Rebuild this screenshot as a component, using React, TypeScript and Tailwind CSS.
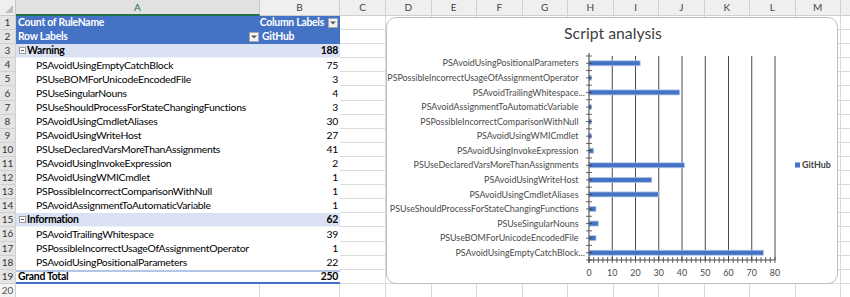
import React from "react";

type Row = {
  kind: "head1" | "head2" | "group" | "item" | "total" | "empty";
  label?: string;
  value?: number;
};

const ROWS: Row[] = [
  { kind: "head1" },
  { kind: "head2" },
  { kind: "group", label: "Warning", value: 188 },
  { kind: "item", label: "PSAvoidUsingEmptyCatchBlock", value: 75 },
  { kind: "item", label: "PSUseBOMForUnicodeEncodedFile", value: 3 },
  { kind: "item", label: "PSUseSingularNouns", value: 4 },
  { kind: "item", label: "PSUseShouldProcessForStateChangingFunctions", value: 3 },
  { kind: "item", label: "PSAvoidUsingCmdletAliases", value: 30 },
  { kind: "item", label: "PSAvoidUsingWriteHost", value: 27 },
  { kind: "item", label: "PSUseDeclaredVarsMoreThanAssignments", value: 41 },
  { kind: "item", label: "PSAvoidUsingInvokeExpression", value: 2 },
  { kind: "item", label: "PSAvoidUsingWMICmdlet", value: 1 },
  { kind: "item", label: "PSPossibleIncorrectComparisonWithNull", value: 1 },
  { kind: "item", label: "PSAvoidAssignmentToAutomaticVariable", value: 1 },
  { kind: "group", label: "Information", value: 62 },
  { kind: "item", label: "PSAvoidTrailingWhitespace", value: 39 },
  { kind: "item", label: "PSPossibleIncorrectUsageOfAssignmentOperator", value: 1 },
  { kind: "item", label: "PSAvoidUsingPositionalParameters", value: 22 },
  { kind: "total", label: "Grand Total", value: 250 },
  { kind: "empty" },
];

const EXTRA_COLS = ["C", "D", "E", "F", "G", "H", "I", "J", "K", "L", "M", ""];

// chart categories, top to bottom as Excel draws them
const SERIES: { name: string; value: number; cut?: boolean }[] = [
  { name: "PSAvoidUsingPositionalParameters", value: 22 },
  { name: "PSPossibleIncorrectUsageOfAssignmentOperator", value: 1 },
  { name: "PSAvoidTrailingWhitespace", value: 39, cut: true },
  { name: "PSAvoidAssignmentToAutomaticVariable", value: 1 },
  { name: "PSPossibleIncorrectComparisonWithNull", value: 1 },
  { name: "PSAvoidUsingWMICmdlet", value: 1 },
  { name: "PSAvoidUsingInvokeExpression", value: 2 },
  { name: "PSUseDeclaredVarsMoreThanAssignments", value: 41 },
  { name: "PSAvoidUsingWriteHost", value: 27 },
  { name: "PSAvoidUsingCmdletAliases", value: 30 },
  { name: "PSUseShouldProcessForStateChangingFunctions", value: 3 },
  { name: "PSUseSingularNouns", value: 4 },
  { name: "PSUseBOMForUnicodeEncodedFile", value: 3 },
  { name: "PSAvoidUsingEmptyCatchBlock", value: 75, cut: true },
];

function Dropdown() {
  return (
    <span className="w-[10px] h-[10px] shrink-0 bg-[#f4f4f4] border border-[#a6a6a6] flex items-center justify-center">
      <svg width="6" height="4" viewBox="0 0 6 4">
        <path d="M0 0.5 L6 0.5 L3 3.5 Z" fill="#595959" />
      </svg>
    </span>
  );
}

function Collapse() {
  return (
    <span className="w-[7px] h-[7px] mr-[1px] shrink-0 border border-[#9a9a9a] bg-white flex items-center justify-center">
      <span className="w-[3px] h-[1px] bg-[#555]" />
    </span>
  );
}

function TableCells({ row }: { row: Row }) {
  const a = "w-[244px] shrink-0 flex items-center overflow-hidden whitespace-nowrap";
  const b = "w-[80px] shrink-0 flex items-center justify-end pr-[2px] whitespace-nowrap";
  switch (row.kind) {
    case "head1":
      return (
        <>
          <div className={`${a} bg-[#4472c4] text-white font-bold pl-[2px]`}>Count of RuleName</div>
          <div className={`${b} bg-[#4472c4] text-white font-bold gap-[4px] pr-[1px]`}>
            Column Labels
            <Dropdown />
          </div>
        </>
      );
    case "head2":
      return (
        <>
          <div className={`${a} bg-[#4472c4] text-white font-bold pl-[2px] justify-between pr-[1px]`}>
            Row Labels
            <Dropdown />
          </div>
          <div className={`${b} bg-[#4472c4] text-white font-bold justify-start pl-[2px]`}>GitHub</div>
        </>
      );
    case "group":
      return (
        <>
          <div className={`${a} bg-[#d9e1f2] font-bold pl-[3px] border-b border-[#eef2f9]`}>
            <Collapse />
            {row.label}
          </div>
          <div className={`${b} bg-[#d9e1f2] font-bold border-b border-[#eef2f9]`}>{row.value}</div>
        </>
      );
    case "item":
      return (
        <>
          <div className={`${a} bg-white pl-[20px]`}>{row.label}</div>
          <div className={`${b} bg-white`}>{row.value}</div>
        </>
      );
    case "total":
      return (
        <>
          <div className={`${a} bg-white font-bold pl-[2px] border-t-2 border-b-2 border-t-[#b4c6e7] border-b-[#4472c4]`}>
            {row.label}
          </div>
          <div className={`${b} bg-white font-bold border-t-2 border-b-2 border-t-[#b4c6e7] border-b-[#4472c4]`}>
            {row.value}
          </div>
        </>
      );
    default:
      return (
        <>
          <div className="w-[244px] shrink-0 border-r border-b border-[#dadada] bg-white" />
          <div className="w-[80px] shrink-0 border-r border-b border-[#dadada] bg-white" />
        </>
      );
  }
}

function Chart() {
  const x0 = 202;
  const unit = 2.325;
  const top = 38;
  const bottom = 242;
  const step = (bottom - top) / SERIES.length;
  const ticksY: number[] = [];
  for (let i = 0; i <= SERIES.length * 2; i++) ticksY.push(top + (i * step) / 2);
  const ticksX: number[] = [];
  for (let v = 0; v <= 80; v += 2) ticksX.push(x0 + v * unit);

  return (
    <svg width="452" height="267" viewBox="0 0 452 267" className="block">
      <text x="226" y="21" textAnchor="middle" fontSize="15.8" fill="#404040" fontFamily="Lato, sans-serif">
        Script analysis
      </text>

      {/* gridlines */}
      {[1, 2, 3, 4, 5, 6, 7, 8].map((k) => (
        <line key={k} x1={x0 + k * 10 * unit} x2={x0 + k * 10 * unit} y1={top} y2={bottom} stroke="#4a4a4a" strokeWidth="1" />
      ))}

      {/* bars */}
      {SERIES.map((s, i) => {
        const cy = top + (i + 0.5) * step;
        return (
          <rect
            key={s.name}
            x={x0}
            y={cy - 2.5}
            width={s.value * unit}
            height={5}
            fill="#4472c4"
            stroke="#b4c7e7"
            strokeWidth="0.8"
          />
        );
      })}

      {/* axes */}
      <line x1={x0} x2={x0} y1={top - 3} y2={bottom + 3} stroke="#404040" strokeWidth="1" />
      <line x1={x0} x2={x0 + 80 * unit} y1={bottom} y2={bottom} stroke="#404040" strokeWidth="1" />
      {ticksY.map((y, i) => (
        <line key={`ty${i}`} x1={x0 - 3} x2={x0 + 3} y1={y} y2={y} stroke="#404040" strokeWidth="0.8" />
      ))}
      {ticksX.map((x, i) => (
        <line key={`tx${i}`} x1={x} x2={x} y1={bottom - 3} y2={bottom + 3} stroke="#404040" strokeWidth="0.8" />
      ))}

      {/* category labels */}
      {SERIES.map((s, i) => {
        const cy = top + (i + 0.5) * step + 3.2;
        return (
          <g key={`l${i}`} fontSize="8.9" fill="#4a4a4a" fontFamily="Lato, sans-serif">
            <text x={191.5} y={cy} textAnchor="end">
              {s.name}
            </text>
            {s.cut && (
              <text x={191.5} y={cy}>
                ...
              </text>
            )}
          </g>
        );
      })}

      {/* value labels */}
      {[0, 10, 20, 30, 40, 50, 60, 70, 80].map((v) => (
        <text key={v} x={x0 + v * unit} y={258} textAnchor="middle" fontSize="8.9" fill="#4a4a4a" fontFamily="Lato, sans-serif">
          {v}
        </text>
      ))}

      {/* legend */}
      <rect x="408" y="144.5" width="5" height="5" fill="#4472c4" />
      <text x="415" y="150" fontSize="8.9" fill="#404040" fontWeight="bold" fontFamily="Lato, sans-serif">
        GitHub
      </text>
    </svg>
  );
}

export default function App() {
  return (
    <div
      className="relative w-[850px] h-[297px] overflow-hidden bg-white text-[10.4px] tracking-[-0.25px] text-black"
      style={{ fontFamily: "Lato, 'Liberation Sans', sans-serif" }}
    >
      {/* column headers */}
      <div className="flex h-[16px] tracking-normal">
        <div className="w-[16px] shrink-0 bg-[#efefef] border-r border-b border-[#c8c8c8] relative">
          <svg className="absolute right-[2px] bottom-[2px]" width="8" height="8" viewBox="0 0 8 8">
            <path d="M8 0 L8 8 L0 8 Z" fill="#bfbfbf" />
          </svg>
        </div>
        <div className="w-[244px] shrink-0 flex items-center justify-center bg-[#e1e1e1] border-r border-[#c8c8c8] border-b-2 border-b-[#217346] text-[#217346] text-[10px]">
          A
        </div>
        <div className="w-[80px] shrink-0 flex items-center justify-center bg-[#efefef] border-r border-b border-[#d0d0d0] text-[#444] text-[10px]">
          B
        </div>
        {EXTRA_COLS.map((c, i) => (
          <div
            key={i}
            className={`${i === 0 ? "w-[46px]" : "w-[45.5px]"} shrink-0 flex items-center justify-center bg-[#efefef] border-r border-b border-[#d0d0d0] text-[#444] text-[10px]`}
          >
            {c}
          </div>
        ))}
      </div>

      {/* rows */}
      {ROWS.map((row, idx) => (
        <div key={idx} className="flex h-[14.1px]">
          <div
            className={`w-[16px] shrink-0 flex items-center justify-center border-r border-b border-[#d0d0d0] text-[10px] tracking-normal ${
              row.kind === "empty" ? "bg-[#f3f3f3] text-[#555]" : "bg-[#e4e4e4] text-[#333]"
            }`}
          >
            {idx + 1}
          </div>
          <TableCells row={row} />
          {EXTRA_COLS.map((c, i) => (
            <div key={i} className={`${i === 0 ? "w-[46px]" : "w-[45.5px]"} shrink-0 border-r border-b border-[#dadada]`} />
          ))}
        </div>
      ))}

      {/* floating chart object */}
      <div className="absolute left-[386px] top-[17px] w-[452px] h-[267px] bg-white border border-[#bfbfbf] rounded-[10px] overflow-hidden tracking-normal">
        <Chart />
      </div>
    </div>
  );
}
